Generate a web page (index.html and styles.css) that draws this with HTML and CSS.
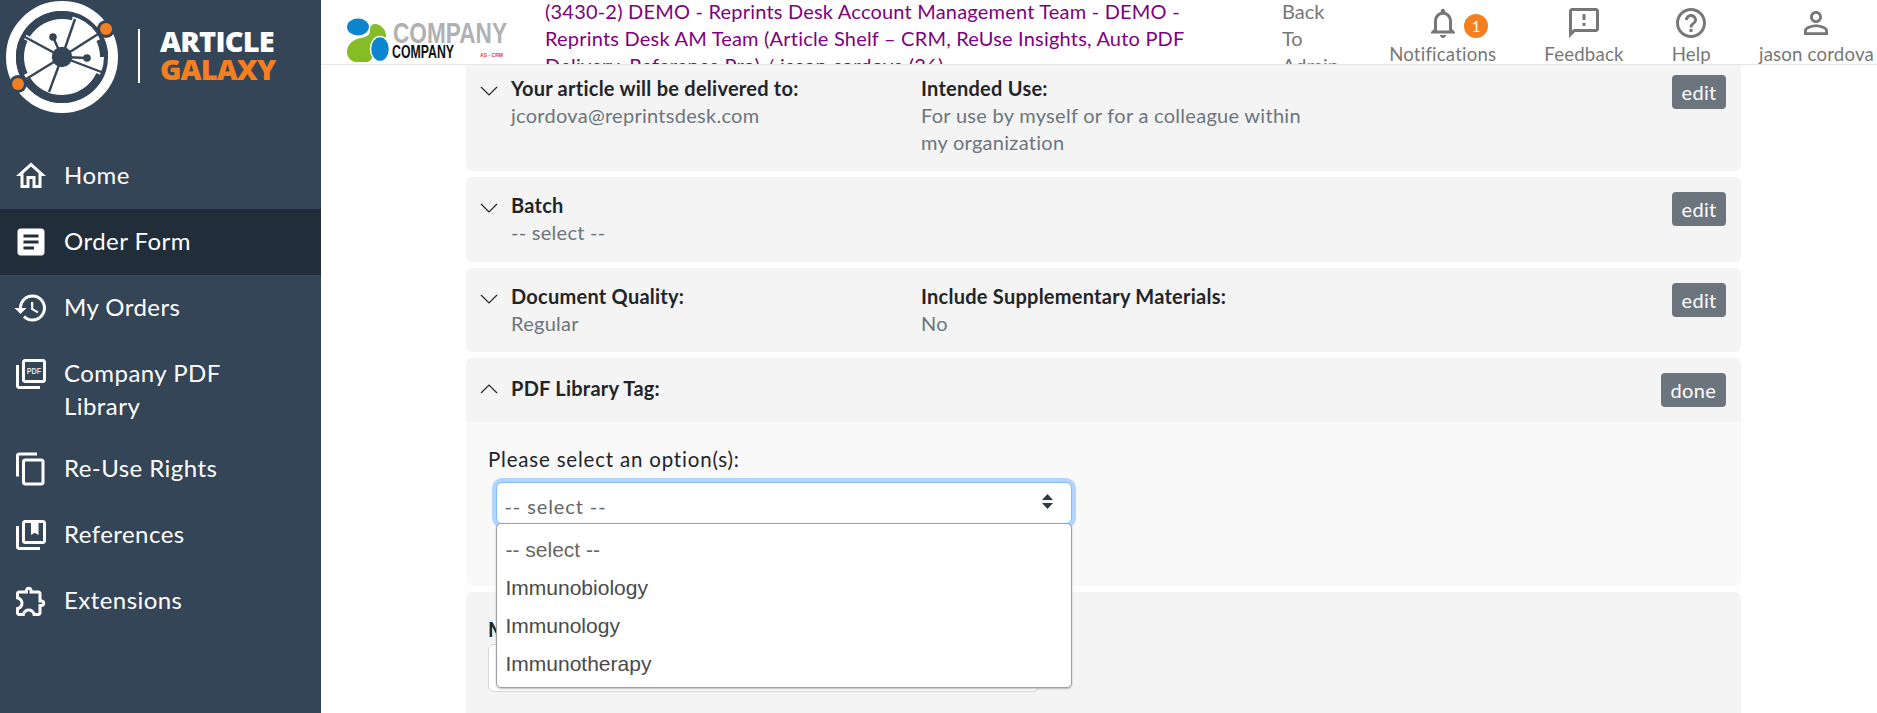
FILE: index.html
```html
<!DOCTYPE html>
<html lang="en">
<head>
<meta charset="utf-8">
<title>Article Galaxy</title>
<link rel="stylesheet" href="styles.css">
</head>
<body>
<div class="app">
  <aside class="sidebar">
    <div class="brand">
      <svg class="brand-mark" viewBox="0 0 124 114" width="124" height="114" aria-hidden="true">
        <circle cx="62" cy="57" r="51" fill="none" stroke="#fff" stroke-width="10"/>
        <circle cx="62" cy="57" r="42" fill="#fff"/>
        <g fill="none" stroke="#344557" stroke-width="8">
          <circle cx="62" cy="57" r="42" pathLength="360" stroke-dasharray="73 360" stroke-dashoffset="-212"/>
          <circle cx="62" cy="57" r="42" pathLength="360" stroke-dasharray="42 360" stroke-dashoffset="-335"/>
          <circle cx="62" cy="57" r="42" pathLength="360" stroke-dasharray="122 360" stroke-dashoffset="-25"/>
          <circle cx="62" cy="57" r="42" pathLength="360" stroke-dasharray="50 360" stroke-dashoffset="-155"/>
        </g>
        <g stroke="#344557" stroke-width="2.4" fill="#344557">
          <line x1="62" y1="57" x2="106" y2="29"/>
          <line x1="62" y1="57" x2="18" y2="84"/>
          <line x1="62" y1="57" x2="23" y2="36"/>
          <line x1="62" y1="57" x2="75" y2="19"/>
          <line x1="62" y1="57" x2="104" y2="73"/>
          <line x1="62" y1="57" x2="49" y2="92"/>
          <line x1="62" y1="57" x2="53" y2="37"/>
          <line x1="62" y1="57" x2="87" y2="58"/>
          <circle cx="62" cy="57" r="9"/>
          <circle cx="53" cy="37" r="2.6"/>
          <circle cx="87" cy="58" r="2.6"/>
        </g>
        <circle cx="106" cy="29" r="9" fill="#344557"/>
        <circle cx="18" cy="84" r="9" fill="#344557"/>
        <circle cx="106" cy="29" r="6" fill="#f47f20"/>
        <circle cx="18" cy="84" r="6" fill="#f47f20"/>
      </svg>
      <span class="brand-rule"></span>
      <div class="brand-name">
        <span class="brand-article">ARTICLE</span>
        <span class="brand-galaxy">GALAXY</span>
      </div>
    </div>
    <nav class="nav">
      <a class="nav-item">
        <svg class="nav-icon" viewBox="0 0 24 24"><path d="M12 5.69l5 4.5V18h-2v-6H9v6H7v-7.81l5-4.5M12 3L2 12h3v8h6v-6h2v6h6v-8h3L12 3z"/></svg>
        <span class="nav-label">Home</span>
      </a>
      <a class="nav-item is-active">
        <svg class="nav-icon" viewBox="0 0 24 24"><path d="M19 3H5c-1.1 0-2 .9-2 2v14c0 1.1.9 2 2 2h14c1.1 0 2-.9 2-2V5c0-1.1-.9-2-2-2zm-5 14H7v-2h7v2zm3-4H7v-2h10v2zm0-4H7V7h10v2z"/></svg>
        <span class="nav-label">Order Form</span>
      </a>
      <a class="nav-item">
        <svg class="nav-icon" viewBox="0 0 24 24"><path d="M13 3c-4.97 0-9 4.03-9 9H1l3.89 3.89.07.14L9 12H6c0-3.87 3.13-7 7-7s7 3.13 7 7-3.13 7-7 7c-1.93 0-3.68-.79-4.94-2.06l-1.42 1.42C8.27 19.99 10.51 21 13 21c4.97 0 9-4.03 9-9s-4.03-9-9-9zm-1 5v5l4.28 2.54.72-1.21-3.5-2.08V8H12z"/></svg>
        <span class="nav-label">My Orders</span>
      </a>
      <a class="nav-item nav-item-tall">
        <svg class="nav-icon" viewBox="0 0 24 24"><path d="M20 2H8c-1.1 0-2 .9-2 2v12c0 1.1.9 2 2 2h12c1.1 0 2-.9 2-2V4c0-1.1-.9-2-2-2zm0 14H8V4h12v12zM4 6H2v14c0 1.1.9 2 2 2h14v-2H4V6z"/><text class="pdf-glyph" x="14" y="12.3" text-anchor="middle" textLength="9.6" lengthAdjust="spacingAndGlyphs">PDF</text></svg>
        <span class="nav-label">Company PDF Library</span>
      </a>
      <a class="nav-item">
        <svg class="nav-icon" viewBox="0 0 24 24"><path d="M16 1H4c-1.1 0-2 .9-2 2v14h2V3h12V1zm3 4H8c-1.1 0-2 .9-2 2v14c0 1.1.9 2 2 2h11c1.1 0 2-.9 2-2V7c0-1.1-.9-2-2-2zm0 16H8V7h11v14z"/></svg>
        <span class="nav-label">Re-Use Rights</span>
      </a>
      <a class="nav-item">
        <svg class="nav-icon" viewBox="0 0 24 24"><path d="M4 6H2v14c0 1.1.9 2 2 2h14v-2H4V6zm16-4H8c-1.1 0-2 .9-2 2v12c0 1.1.9 2 2 2h12c1.1 0 2-.9 2-2V4c0-1.1-.9-2-2-2zm0 14H8V4h4v8l2.5-1.5L17 12V4h3v12z"/></svg>
        <span class="nav-label">References</span>
      </a>
      <a class="nav-item">
        <svg class="nav-icon" viewBox="0 0 24 24"><path d="M10.5 4.5c.28 0 .5.22.5.5v2h6v6h2c.28 0 .5.22.5.5s-.22.5-.5.5h-2v6h-2.12c-.68-1.75-2.39-3-4.38-3s-3.7 1.25-4.38 3H4v-2.12c1.75-.68 3-2.39 3-4.38 0-1.99-1.24-3.7-2.99-4.38L4 7h6V5c0-.28.22-.5.5-.5m0-2C9.12 2.5 8 3.62 8 5H4c-1.1 0-1.99.9-1.99 2v3.8h.29c1.49 0 2.7 1.21 2.7 2.7s-1.21 2.7-2.7 2.7H2V20c0 1.1.9 2 2 2h3.8v-.3c0-1.49 1.21-2.7 2.7-2.7s2.7 1.21 2.7 2.7v.3H17c1.1 0 2-.9 2-2v-4c1.38 0 2.5-1.12 2.5-2.5S20.38 11 19 11V7c0-1.1-.9-2-2-2h-4c0-1.38-1.12-2.5-2.5-2.5z"/></svg>
        <span class="nav-label">Extensions</span>
      </a>
    </nav>
  </aside>

  <div class="page">
    <header class="topbar">
      <svg class="company-logo" viewBox="0 0 165 46" width="165" height="46" aria-hidden="true">
        <path fill="#84bd26" d="M2 36c0-9 8-13 14-14 6-1 9-3 9-8 0-4 2-6 5-6 6 0 11 6 11 12 0 3-3 4-6 5-4 2-7 6-7 12 0 6-3 10-11 10C8 47 2 43 2 36z"/>
        <ellipse cx="13" cy="11" rx="11" ry="8.5" fill="#0b85d0"/>
        <ellipse cx="35" cy="33" rx="9.5" ry="12.5" fill="#0b85d0" stroke="#fff" stroke-width="1.5"/>
        <text class="logo-big" x="48" y="27" textLength="114" lengthAdjust="spacingAndGlyphs">COMPANY</text>
        <text class="logo-small" x="47" y="42" textLength="62" lengthAdjust="spacingAndGlyphs">COMPANY</text>
        <text class="logo-tiny" x="135" y="41" textLength="23" lengthAdjust="spacingAndGlyphs">AS - CRM</text>
      </svg>
      <div class="account-title">(3430-2) DEMO - Reprints Desk Account Management Team - DEMO - Reprints Desk AM Team (Article Shelf – CRM, ReUse Insights, Auto PDF Delivery, Reference Pro) / jason cordova (26)</div>
      <a class="back-link">Back To Admin</a>
      <div class="top-actions">
        <a class="top-action top-notify">
          <svg class="top-icon" viewBox="0 0 24 24"><path d="M12 22c1.1 0 2-.9 2-2h-4c0 1.1.9 2 2 2zm6-6v-5c0-3.07-1.63-5.64-4.5-6.32V4c0-.83-.67-1.5-1.5-1.5s-1.5.67-1.5 1.5v.68C7.64 5.36 6 7.92 6 11v5l-2 2v1h16v-1l-2-2zm-2 1H8v-6c0-2.48 1.51-4.5 4-4.5s4 2.02 4 4.5v6z"/></svg>
          <span class="badge">1</span>
          <span>Notifications</span>
        </a>
        <a class="top-action">
          <svg class="top-icon" viewBox="0 0 24 24"><path d="M20 2H4c-1.1 0-1.99.9-1.99 2L2 22l4-4h14c1.1 0 2-.9 2-2V4c0-1.1-.9-2-2-2zm0 14H5.17L4 17.17V4h16v12zm-9-4h2v2h-2zm0-6h2v4h-2z"/></svg>
          <span>Feedback</span>
        </a>
        <a class="top-action">
          <svg class="top-icon" viewBox="0 0 24 24"><path d="M11 18h2v-2h-2v2zm1-16C6.48 2 2 6.48 2 12s4.48 10 10 10 10-4.48 10-10S17.52 2 12 2zm0 18c-4.41 0-8-3.59-8-8s3.59-8 8-8 8 3.59 8 8-3.59 8-8 8zm0-14c-2.21 0-4 1.79-4 4h2c0-1.1.9-2 2-2s2 .9 2 2c0 2-3 1.75-3 5h2c0-2.25 3-2.5 3-5 0-2.21-1.79-4-4-4z"/></svg>
          <span>Help</span>
        </a>
        <a class="top-action">
          <svg class="top-icon" viewBox="0 0 24 24"><path d="M12 5.9c1.16 0 2.1.94 2.1 2.1s-.94 2.1-2.1 2.1S9.9 9.16 9.9 8s.94-2.1 2.1-2.1m0 9c2.97 0 6.1 1.46 6.1 2.1v1.1H5.9V17c0-.64 3.13-2.1 6.1-2.1M12 4C9.79 4 8 5.79 8 8s1.79 4 4 4 4-1.79 4-4-1.79-4-4-4zm0 9c-2.67 0-8 1.34-8 4v3h16v-3c0-2.66-5.33-4-8-4z"/></svg>
          <span>jason cordova</span>
        </a>
      </div>
    </header>

    <main class="content">
      <div class="sections">
        <section class="card">
          <div class="card-row">
            <svg class="chevron" viewBox="0 0 18 10"><path d="M1 1l8 8 8-8"/></svg>
            <div class="col col-first"><h3 class="col-title">Your article will be delivered to:</h3><p class="col-value">jcordova@reprintsdesk.com</p></div>
            <div class="col col-second"><h3 class="col-title">Intended Use:</h3><p class="col-value">For use by myself or for a colleague within my organization</p></div>
            <button class="btn">edit</button>
          </div>
        </section>
        <section class="card">
          <div class="card-row">
            <svg class="chevron" viewBox="0 0 18 10"><path d="M1 1l8 8 8-8"/></svg>
            <div class="col col-first"><h3 class="col-title">Batch</h3><p class="col-value">-- select --</p></div>
            <button class="btn">edit</button>
          </div>
        </section>
        <section class="card">
          <div class="card-row">
            <svg class="chevron" viewBox="0 0 18 10"><path d="M1 1l8 8 8-8"/></svg>
            <div class="col col-first"><h3 class="col-title">Document Quality:</h3><p class="col-value">Regular</p></div>
            <div class="col col-second"><h3 class="col-title">Include Supplementary Materials:</h3><p class="col-value">No</p></div>
            <button class="btn">edit</button>
          </div>
        </section>
        <section class="card card-open">
          <div class="card-row card-row-open">
            <svg class="chevron" viewBox="0 0 18 10"><path d="M1 9l8-8 8 8"/></svg>
            <div class="col col-first col-open"><h3 class="col-title">PDF Library Tag:</h3></div>
            <button class="btn">done</button>
          </div>
          <div class="card-body">
            <label class="field-label">Please select an option(s):</label>
            <div class="select-wrap">
              <div class="select-box">
                <span>-- select --</span>
                <svg class="select-arrows" viewBox="0 0 11 15"><path d="M5.5 0L11 6H0zM5.5 15L0 9h11z"/></svg>
              </div>
              <ul class="select-menu">
                <li class="is-placeholder">-- select --</li>
                <li>Immunobiology</li>
                <li>Immunology</li>
                <li>Immunotherapy</li>
              </ul>
            </div>
          </div>
        </section>
        <section class="card card-next">
          <h3 class="col-title">My Notes:</h3>
          <div class="text-input"></div>
        </section>
      </div>
    </main>
  </div>
</div>
</body>
</html>
```
FILE: styles.css
```css
* { box-sizing: border-box; }
html, body { margin: 0; height: 100%; }
body {
  font-family: "Lato", "Noto Sans", sans-serif;
  font-size: 20px;
  line-height: 27px;
  color: #212529;
  background: #fff;
  overflow: hidden;
}
.app { display: flex; height: 713px; overflow: hidden; }

/* Sidebar */
.sidebar { width: 321px; flex: none; background: #344557; color: #fff; }
.brand { height: 143px; display: flex; align-items: flex-start; position: relative; }
.brand-mark { display: block; flex: none; }
.brand-rule { width: 2px; height: 54px; background: #fff; margin: 29px 0 0 14px; flex: none; }
.brand-name { display: flex; flex-direction: column; margin: 27px 0 0 20px; font-family: "Open Sans", sans-serif; font-weight: 800; font-size: 29px; line-height: 28px; }
.brand-article { color: #fff; letter-spacing: -0.8px; }
.brand-galaxy { color: #f47f20; letter-spacing: -0.9px; }
.nav { display: flex; flex-direction: column; }
.nav-item { display: flex; align-items: flex-start; gap: 15px; padding: 15px 13px; font-size: 24px; line-height: 33px; color: #fff; }
.nav-item.is-active { background: #212d39; }
.nav-item-tall { padding-bottom: 14px; }
.nav-icon { width: 36px; height: 36px; flex: none; fill: #fff; }
.nav-label { max-width: 200px; letter-spacing: 0.45px; }
.pdf-glyph { font-family: "Liberation Sans", sans-serif; font-size: 6px; font-weight: 700; fill: #dfe3e7; }

/* Top bar */
.page { flex: 1; min-width: 0; display: flex; flex-direction: column; }
.topbar { height: 65px; flex: none; display: flex; align-items: flex-start; padding-left: 24px; border-bottom: 1px solid #e7e7e7; overflow: hidden; background: #fff; }
.company-logo { display: block; flex: none; margin-top: 16px; }
.logo-big { font-family: "Liberation Sans", sans-serif; font-weight: 700; font-size: 30px; fill: #b1b1b1; }
.logo-small { font-family: "Liberation Sans", sans-serif; font-weight: 700; font-size: 18px; fill: #111; }
.logo-tiny { font-family: "Liberation Sans", sans-serif; font-weight: 700; font-size: 6px; fill: #d9453d; }
.account-title { width: 650px; flex: none; margin: -2px 0 0 35px; color: #800080; font-size: 20px; letter-spacing: 0.2px; }
.back-link { width: 60px; flex: none; margin: -2px 0 0 87px; color: #777; font-size: 20px; }
.top-actions { display: flex; align-items: flex-start; gap: 48px; margin-left: auto; padding-right: 3px; color: #777; font-size: 18.6px; }
.top-action { display: flex; flex-direction: column; align-items: center; padding-top: 5px; position: relative; white-space: nowrap; letter-spacing: 0.2px; }
.top-icon { width: 36px; height: 36px; fill: #777; display: block; }
.badge { position: absolute; top: 14px; left: 75px; width: 24px; height: 24px; border-radius: 50%; background: #f47f20; color: #fff; font-size: 15px; line-height: 24px; text-align: center; }

/* Content */
.content { flex: 1; min-height: 0; overflow: hidden; padding: 0 136px 0 145px; }
.sections { display: flex; flex-direction: column; gap: 6px; margin-top: -5.5px; }
.card { background: #f4f4f4; border-radius: 6px; flex: none; }
.card-row { display: flex; align-items: flex-start; padding: 15px 15px 15.5px 0; }
.card-row-open { padding: 15px 15px 15px 0; }
.card-row-open .btn { padding: 0 10px; }
.col-open { padding-top: 1.5px; }
.chevron { width: 18px; height: 10px; flex: none; margin: 11px 13.5px 0 13.5px; fill: none; stroke: #212529; stroke-width: 1.2; }
.col { flex: none; }
.col-first { width: 410px; }
.col-second { width: 400px; }
.col-title { margin: 0; font-size: 20px; line-height: 27px; font-weight: 700; letter-spacing: 0.25px; color: #212529; }
.col-value { margin: 0; color: #6c757d; letter-spacing: 0.28px; }
.btn { margin-left: auto; padding: 0 9.5px; height: 34px; border: 0; border-radius: 4px; background: #6c757d; color: #fff; font: 20px/34px "Lato", sans-serif; letter-spacing: 0.3px; }

/* Open section */
.card-body { background: #f9f9f9; padding: 24px 22px 0; height: 164px; border-radius: 0 0 6px 6px; }
.field-label { display: block; color: #212529; font-size: 20.5px; letter-spacing: 0.8px; }
.select-wrap { position: relative; width: 576.5px; margin: 9px 0 0 7.5px; }
.select-box { height: 42px; display: flex; align-items: center; justify-content: space-between; padding: 6px 18px 0 8px; background: #fff; border: 1px solid #80bdff; border-radius: 6px; box-shadow: 0 0 0 4px #b3d4fc; color: #666; font-size: 20px; letter-spacing: 0.9px; }
.select-arrows { width: 11px; height: 15px; fill: #343a40; margin-top: -10px; }
.select-menu { position: absolute; z-index: 2; left: 0; right: 0; top: 41px; margin: 0; padding: 7px 0 0; height: 165px; list-style: none; background: #fff; border: 1px solid #a0a0a0; border-radius: 5px; box-shadow: 0 1px 2px rgba(0,0,0,.25); font-family: "Liberation Sans", sans-serif; font-size: 21px; color: #4a4a4a; }
.select-menu li { height: 38px; line-height: 38px; padding-left: 9px; }
.select-menu .is-placeholder { color: #666; }
.card-next { padding: 24px 22px 0; height: 140px; }
.text-input { width: 551px; height: 48px; margin-top: 1px; border: 1px solid #d8d8d8; border-radius: 6px; background: #fff; }
```
